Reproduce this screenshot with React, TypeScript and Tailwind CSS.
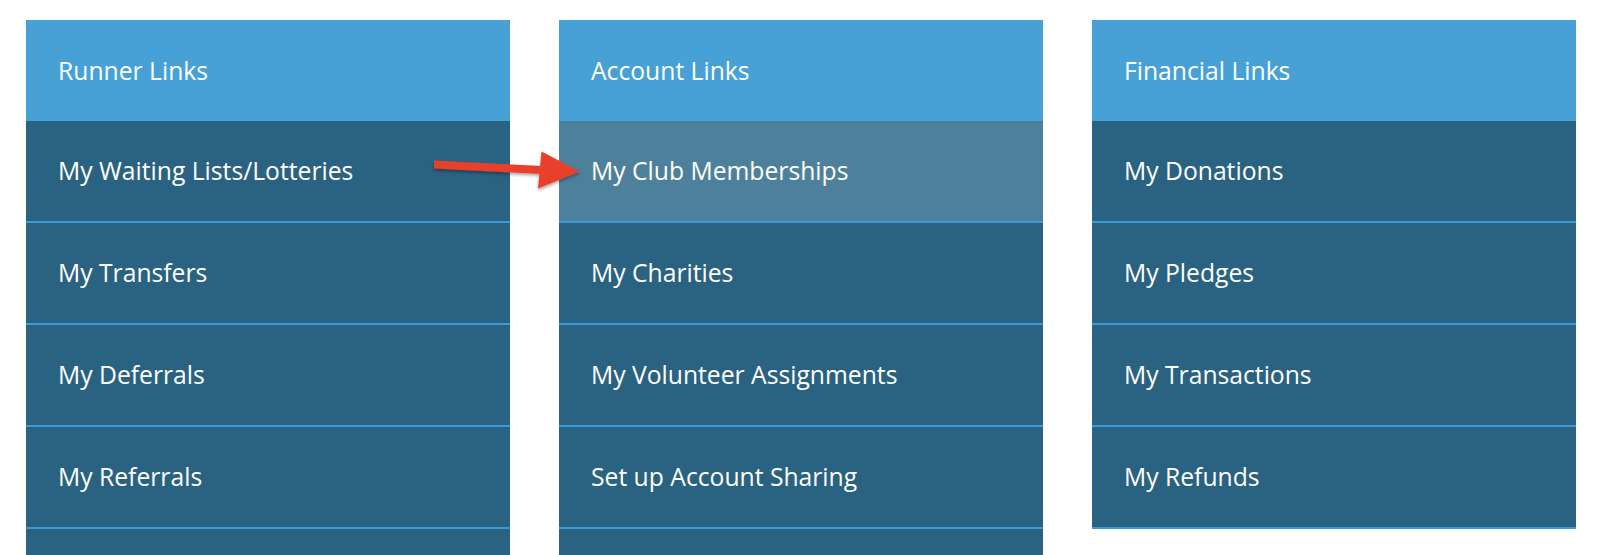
import React from "react";

type Col = { title: string; items: string[]; highlight?: number };

const cols: Col[] = [
  {
    title: "Runner Links",
    items: ["My Waiting Lists/Lotteries", "My Transfers", "My Deferrals", "My Referrals", ""],
  },
  {
    title: "Account Links",
    items: ["My Club Memberships", "My Charities", "My Volunteer Assignments", "Set up Account Sharing", ""],
    highlight: 0,
  },
  {
    title: "Financial Links",
    items: ["My Donations", "My Pledges", "My Transactions", "My Refunds"],
  },
];

function Column({ col }: { col: Col }) {
  return (
    <div className="w-[484px] shrink-0 flex flex-col">
      <div className="h-[101.5px] bg-[#47a1d6] flex items-center pl-[32px] text-white text-[24.7px]">
        {col.title}
      </div>
      {col.items.map((it, i) => (
        <div
          key={i}
          className={
            (i === col.highlight ? "bg-[#4d819b] " : "bg-[#2a6281] ") +
            "h-[102px] shrink-0 border-b-2 border-[#3a9bdb] flex items-center pl-[32px] text-white text-[24.7px]"
          }
        >
          {it}
        </div>
      ))}
    </div>
  );
}

export default function App() {
  return (
    <div
      className="relative w-[1600px] h-[555px] overflow-hidden bg-white"
      style={{ fontFamily: '"Open Sans", "Noto Sans", sans-serif' }}
    >
      <div className="flex items-start gap-[49px] pl-[26px] pt-[19.5px]">
        {cols.map((c) => (
          <Column key={c.title} col={c} />
        ))}
      </div>
      <svg
        className="absolute left-0 top-0 pointer-events-none"
        width="1600"
        height="555"
        viewBox="0 0 1600 555"
      >
        <defs>
          <filter id="sh" x="-20%" y="-50%" width="140%" height="200%">
            <feDropShadow dx="0" dy="2" stdDeviation="1.5" floodColor="#000" floodOpacity="0.35" />
          </filter>
        </defs>
        <g filter="url(#sh)" fill="#e8402a">
          <polygon points="434,160.5 434,168.5 542,174 542,166" />
          <polygon points="541.5,151.5 580,171.5 538,188.5" />
        </g>
      </svg>
    </div>
  );
}
